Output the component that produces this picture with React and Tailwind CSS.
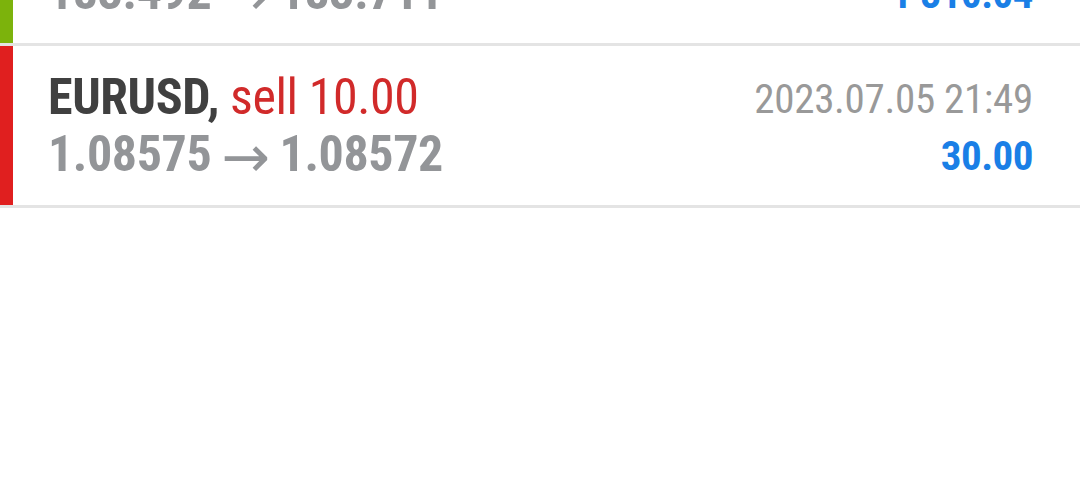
import React from 'react';

const trades = [
  {
    id: 1,
    symbol: 'USDJPY',
    side: 'buy',
    volume: '10.00',
    open: '183.492',
    close: '183.711',
    time: '2023.07.05 21:47',
    profit: '1 310.04',
  },
  {
    id: 2,
    symbol: 'EURUSD',
    side: 'sell',
    volume: '10.00',
    open: '1.08575',
    close: '1.08572',
    time: '2023.07.05 21:49',
    profit: '30.00',
  },
];

const TradeRow = ({ trade }) => {
  const isBuy = trade.side === 'buy';
  return (
    <div className="flex border-b-[3px] border-[#e4e4e4]">
      <div className={`w-[13px] shrink-0 ${isBuy ? 'bg-[#7cb30c]' : 'bg-[#e01f1f]'}`} />
      <div className="flex-1 flex justify-between pl-[35px] pr-[47px] pt-[23px] pb-[20px]">
        <div className="flex flex-col">
          <div className="text-[50px] leading-[57px] tracking-[-0.4px] whitespace-nowrap">
            <span className="font-bold text-[#404040]">{trade.symbol},</span>{' '}
            <span className={isBuy ? 'text-[#1a7fe6]' : 'text-[#d12a2a]'}>
              {trade.side} {trade.volume}
            </span>
          </div>
          <div className="h-[57px] text-[50px] leading-[57px] font-bold text-[#939598] tracking-[-0.4px] whitespace-nowrap flex items-center">
            <span>{trade.open}</span>
            <span
              className="text-[58px] leading-none font-normal ml-[10px] mr-[10px] mt-[4px]"
              style={{ fontFamily: '"DejaVu Sans", sans-serif' }}
            >
              →
            </span>
            <span>{trade.close}</span>
          </div>
        </div>
        <div className="flex flex-col items-end">
          <div className="text-[41px] leading-[57px] text-[#999999] tracking-[-0.3px] mt-[2px] whitespace-nowrap">
            {trade.time}
          </div>
          <div className="text-[41px] leading-[57px] font-bold text-[#1a7fe6] tracking-[-0.5px] whitespace-nowrap">
            {trade.profit}
          </div>
        </div>
      </div>
    </div>
  );
};

export default function App() {
  return (
    <div
      className="w-[1080px] h-[480px] overflow-hidden bg-white"
      style={{ fontFamily: '"Roboto Condensed", Roboto, "Liberation Sans", sans-serif' }}
    >
      <div className="-mt-[116px]">
        {trades.map(t => (
          <TradeRow key={t.id} trade={t} />
        ))}
      </div>
    </div>
  );
}
